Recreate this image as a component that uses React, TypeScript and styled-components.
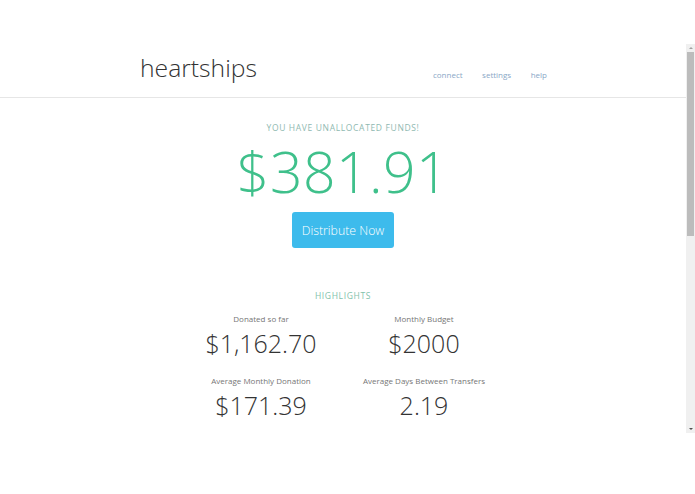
import styled, { createGlobalStyle } from "styled-components";

const GlobalStyle = createGlobalStyle`
  html, body {
    margin: 0;
    padding: 0;
    background: #ffffff;
    font-family: "Open Sans", "Liberation Sans", sans-serif;
    color: #333333;
  }
`;

const Page = styled.div`
  padding-top: 44px;
`;

const Frame = styled.div`
  height: 389px;
  display: flex;
`;

const Content = styled.div`
  flex: 1;
  overflow: hidden;
`;

const ScrollRail = styled.div`
  width: 9px;
  display: flex;
  flex-direction: column;
  background: #f0f0f0;
`;

const RailButton = styled.div`
  height: 8px;
  display: flex;
  align-items: center;
  justify-content: center;
`;

const Arrow = styled.span<{ $up?: boolean }>`
  width: 0;
  height: 0;
  border-left: 2px solid transparent;
  border-right: 2px solid transparent;
  ${(p) =>
    p.$up
      ? "border-bottom: 2px solid #a0a0a0;"
      : "border-top: 2px solid #505050;"}
`;

const Thumb = styled.div`
  height: 184px;
  margin: 0 1px;
  background: #bcbcbc;
`;

const Track = styled.div`
  flex: 1;
`;

const Header = styled.header`
  border-bottom: 1px solid #e6e6e6;
`;

const HeaderInner = styled.div`
  width: 408px;
  margin: 0 auto;
  display: flex;
  justify-content: space-between;
  align-items: flex-end;
  height: 53px;
`;

const Brand = styled.div`
  font-size: 24.7px;
  font-weight: 300;
  color: #333333;
  line-height: 1;
  padding-bottom: 16px;
  margin-left: 1px;
`;

const Nav = styled.nav`
  display: flex;
  gap: 19.5px;
  padding-bottom: 17px;
`;

const NavLink = styled.a`
  font-size: 8px;
  font-weight: 400;
  color: #8aa7c6;
  text-decoration: none;
`;

const Main = styled.main`
  display: flex;
  flex-direction: column;
  align-items: center;
`;

const Kicker = styled.div<{ $tint: string; $top: number }>`
  margin-top: ${(p) => p.$top}px;
  font-size: 8.5px;
  letter-spacing: 0.65px;
  text-transform: uppercase;
  color: ${(p) => p.$tint};
  line-height: 12px;
`;

const Balance = styled.div`
  font-size: 57px;
  font-weight: 300;
  color: #3fc08b;
  line-height: 66px;
  margin-top: 3.5px;
  letter-spacing: 0.5px;
`;

const Button = styled.button`
  margin-top: 8.5px;
  width: 102px;
  height: 36px;
  border: none;
  border-radius: 3px;
  background: #3dbbec;
  color: #ffffff;
  font-family: "Open Sans", "Liberation Sans", sans-serif;
  font-size: 12.3px;
  font-weight: 300;
  cursor: pointer;
`;

const Stats = styled.div`
  display: grid;
  grid-template-columns: 163px 163px;
  row-gap: 19px;
  margin-top: 11px;
  margin-left: -1px;
`;

const Stat = styled.div`
  display: flex;
  flex-direction: column;
  align-items: center;
`;

const StatLabel = styled.div`
  font-size: 8px;
  color: #767676;
  line-height: 12px;
`;

const StatValue = styled.div`
  font-size: 25px;
  font-weight: 300;
  color: #333333;
  line-height: 1;
  margin-top: 6px;
`;

const stats = [
  { label: "Donated so far", value: "$1,162.70" },
  { label: "Monthly Budget", value: "$2000" },
  { label: "Average Monthly Donation", value: "$171.39" },
  { label: "Average Days Between Transfers", value: "2.19" },
];

export default function App() {
  return (
    <Page>
      <GlobalStyle />
      <Frame>
        <Content>
          <Header>
            <HeaderInner>
              <Brand>heartships</Brand>
              <Nav>
                <NavLink href="#">connect</NavLink>
                <NavLink href="#">settings</NavLink>
                <NavLink href="#">help</NavLink>
              </Nav>
            </HeaderInner>
          </Header>
          <Main>
            <Kicker $tint="#8fb9b1" $top={24}>
              You have unallocated funds!
            </Kicker>
            <Balance>$381.91</Balance>
            <Button>Distribute Now</Button>
            <Kicker $tint="#7fc2ab" $top={42}>
              Highlights
            </Kicker>
            <Stats>
              {stats.map((s) => (
                <Stat key={s.label}>
                  <StatLabel>{s.label}</StatLabel>
                  <StatValue>{s.value}</StatValue>
                </Stat>
              ))}
            </Stats>
          </Main>
        </Content>
        <ScrollRail>
          <RailButton>
            <Arrow $up />
          </RailButton>
          <Thumb />
          <Track />
          <RailButton>
            <Arrow />
          </RailButton>
        </ScrollRail>
      </Frame>
    </Page>
  );
}
